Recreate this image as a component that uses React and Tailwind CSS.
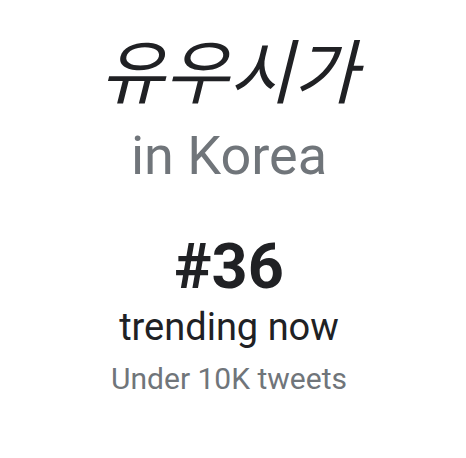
import React from "react";

const trend = {
  term: "유우시가",
  place: "in Korea",
  rank: 36,
  volume: "Under 10K tweets",
};

const App = () => {
  return (
    <div className="w-[466px] h-[458px] bg-white">
      <div
        className="w-[458px] flex flex-col items-center pt-[35px]"
        style={{ fontFamily: "Roboto, 'Noto Sans CJK KR', sans-serif" }}
      >
        <div className="text-[70px] leading-[78px] italic text-[#202124]">
          {trend.term}
        </div>
        <div className="mt-[13px] text-[54px] leading-[60px] text-[#70757a]">
          {trend.place}
        </div>
        <div className="mt-[46px] text-[63px] leading-[70px] font-bold text-[#202124]">
          #{trend.rank}
        </div>
        <div className="mt-[2px] text-[38px] leading-[46px] text-[#202124]">
          trending now
        </div>
        <div className="mt-[9px] text-[30px] leading-[40px] text-[#70757a]">
          {trend.volume}
        </div>
      </div>
    </div>
  );
};

export default App;
